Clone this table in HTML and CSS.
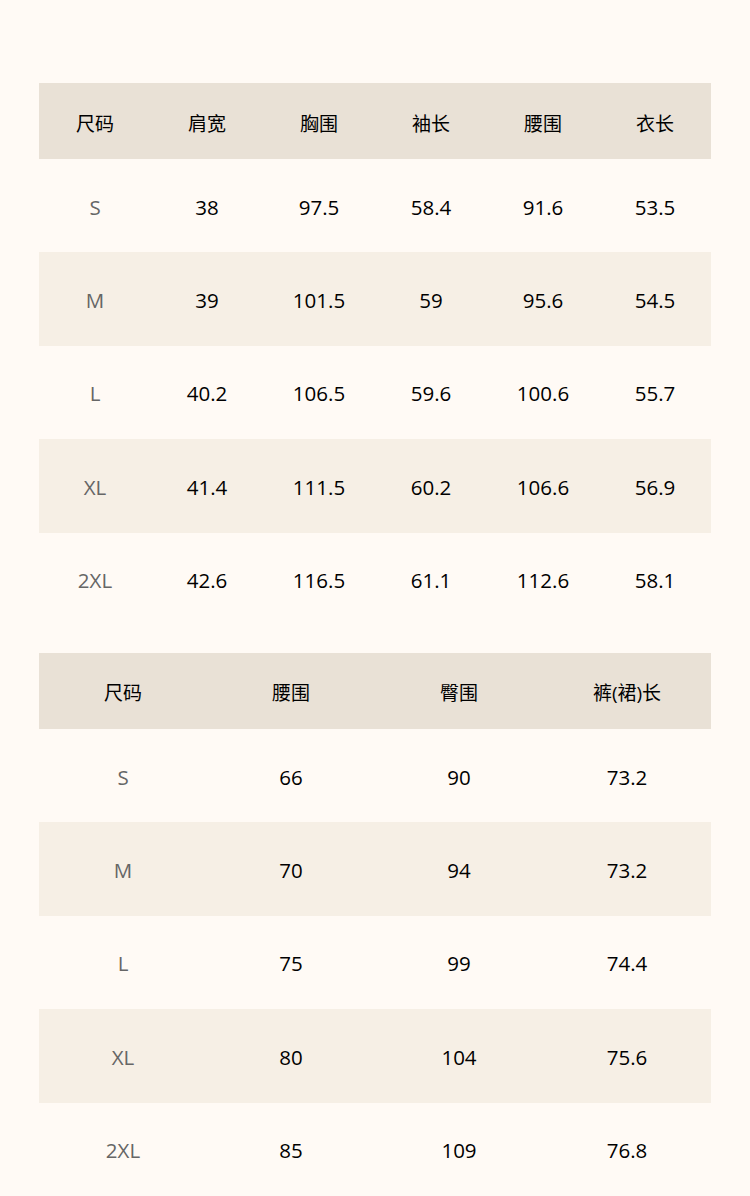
FILE: index.html
```html
<!DOCTYPE html>
<html lang="zh">
<head>
<meta charset="utf-8">
<link rel="stylesheet" href="styles.css">
</head>
<body>
<div class="page">
  <table class="size-table">
    <thead>
      <tr><th>尺码</th><th>肩宽</th><th>胸围</th><th>袖长</th><th>腰围</th><th>衣长</th></tr>
    </thead>
    <tbody>
      <tr><td class="sz">S</td><td>38</td><td>97.5</td><td>58.4</td><td>91.6</td><td>53.5</td></tr>
      <tr><td class="sz">M</td><td>39</td><td>101.5</td><td>59</td><td>95.6</td><td>54.5</td></tr>
      <tr><td class="sz">L</td><td>40.2</td><td>106.5</td><td>59.6</td><td>100.6</td><td>55.7</td></tr>
      <tr><td class="sz">XL</td><td>41.4</td><td>111.5</td><td>60.2</td><td>106.6</td><td>56.9</td></tr>
      <tr><td class="sz">2XL</td><td>42.6</td><td>116.5</td><td>61.1</td><td>112.6</td><td>58.1</td></tr>
    </tbody>
  </table>
  <table class="size-table">
    <thead>
      <tr><th>尺码</th><th>腰围</th><th>臀围</th><th>裤(裙)长</th></tr>
    </thead>
    <tbody>
      <tr><td class="sz">S</td><td>66</td><td>90</td><td>73.2</td></tr>
      <tr><td class="sz">M</td><td>70</td><td>94</td><td>73.2</td></tr>
      <tr><td class="sz">L</td><td>75</td><td>99</td><td>74.4</td></tr>
      <tr><td class="sz">XL</td><td>80</td><td>104</td><td>75.6</td></tr>
      <tr><td class="sz">2XL</td><td>85</td><td>109</td><td>76.8</td></tr>
    </tbody>
  </table>
</div>
</body>
</html>
```

FILE: styles.css
```css
html, body {
  margin: 0;
  padding: 0;
  background: #fffaf5;
}
body {
  font-family: "Open Sans", "Noto Sans CJK SC", sans-serif;
  color: #000;
}
.page {
  padding: 83px 39px 0;
  display: flex;
  flex-direction: column;
  gap: 27px;
}
.size-table {
  width: 672px;
  border-collapse: collapse;
  table-layout: fixed;
}
.size-table th {
  height: 73px;
  padding: 3px 0 0;
  background: #e9e1d6;
  font-weight: 400;
  font-size: 19px;
  text-align: center;
}
.size-table td {
  height: 91.4px;
  padding: 2px 0 0;
  text-align: center;
  font-size: 20.5px;
}
.size-table tbody tr:nth-child(even) td {
  background: #f6efe5;
}
.size-table td.sz {
  color: #666;
}
```
